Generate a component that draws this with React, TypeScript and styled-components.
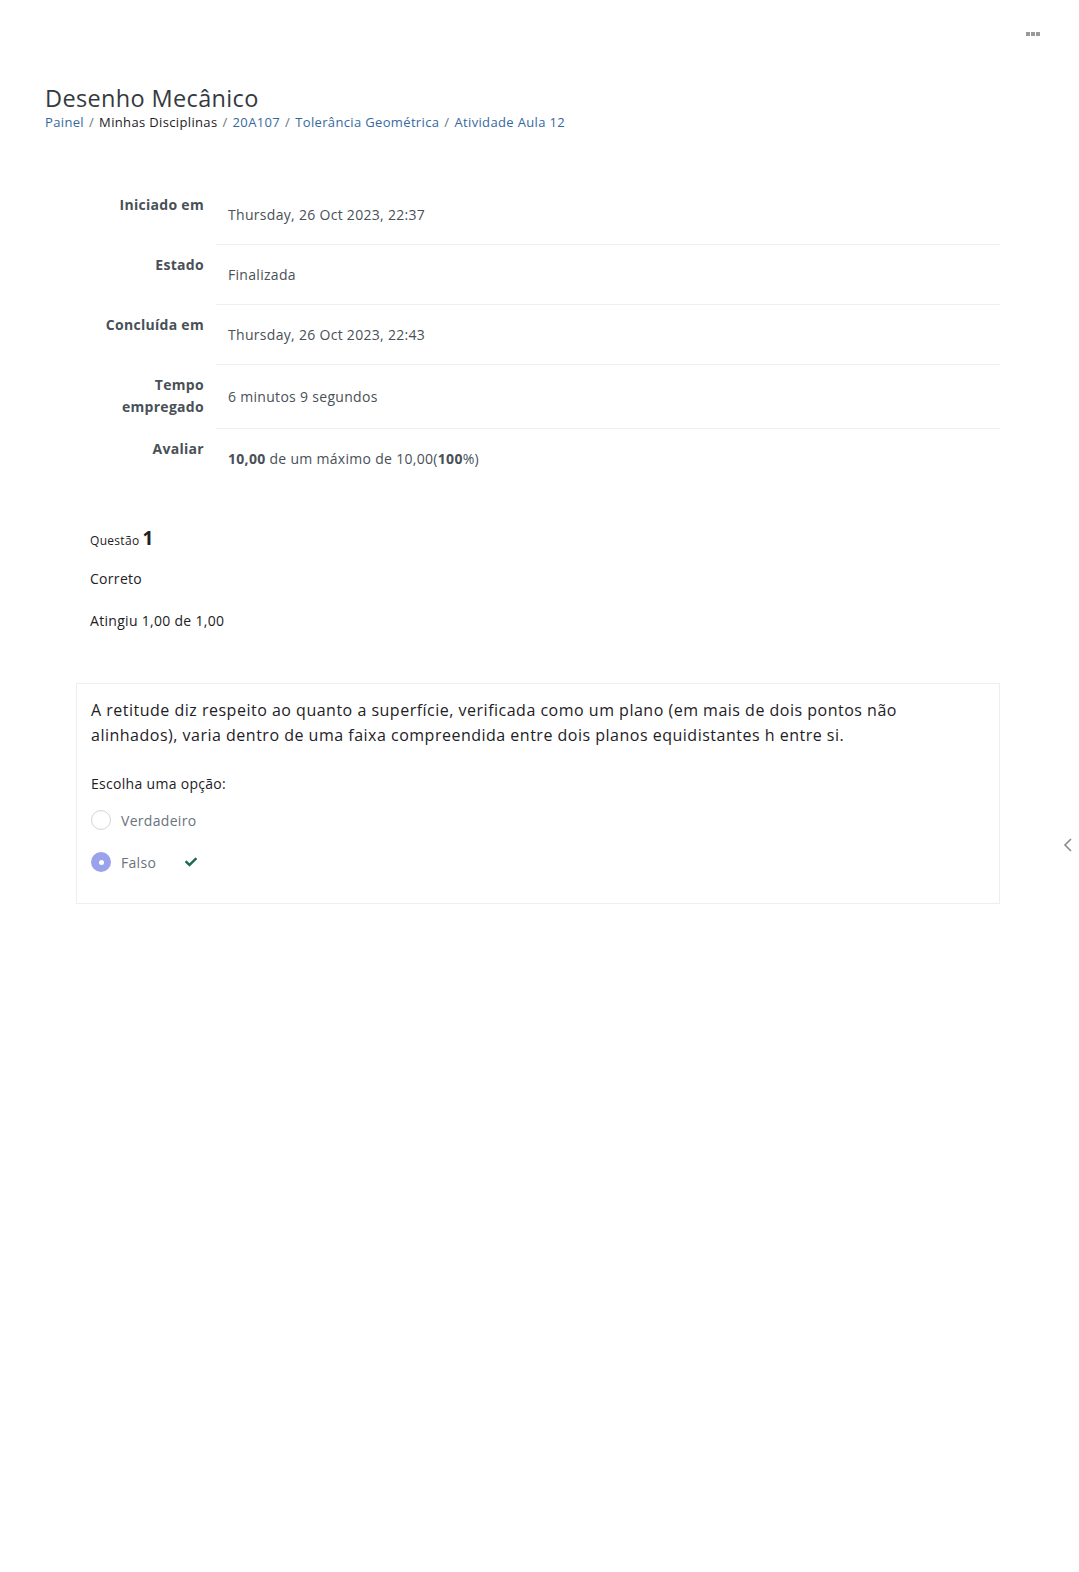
import React from 'react';
import styled, { createGlobalStyle } from 'styled-components';
import { FaCheck } from 'react-icons/fa';

const GlobalStyle = createGlobalStyle`
    html, body {
        margin: 0;
        padding: 0;
        background: #fff;
    }
    body {
        font-family: 'Open Sans', 'Noto Sans', sans-serif;
        color: #1d2125;
        letter-spacing: 0.3px;
        -webkit-font-smoothing: antialiased;
    }
`;

const Page = styled.div`
    position: relative;
    min-height: 1572px;
    padding: 0 79px 0 45px;
    box-sizing: border-box;
`;

const TopBar = styled.div`
    display: flex;
    justify-content: flex-end;
    height: 68px;
    align-items: center;
    margin-right: -40px;
`;

const MoreDots = styled.div`
    display: flex;
    gap: 1px;

    span {
        width: 4px;
        height: 4px;
        background: #9a9a9a;
    }
`;

const Title = styled.h1`
    margin: 16px 0 0;
    font-size: 23.5px;
    font-weight: 400;
    line-height: 28px;
    color: #343a40;
    letter-spacing: 0.35px;
`;

const Breadcrumb = styled.nav`
    display: flex;
    align-items: center;
    font-size: 13px;
    line-height: 20px;
    color: #1d2125;
    letter-spacing: 0.35px;
`;

const Crumb = styled.span<{ $link?: boolean }>`
    color: ${({ $link }) => ($link ? '#35699e' : '#1d2125')};
`;

const Sep = styled.span`
    color: #6a737b;
    padding: 0 5px;
`;

const Content = styled.div`
    margin: 53px 0 0 31px;
`;

const Summary = styled.div`
    display: grid;
    grid-template-columns: 140px 1fr;
`;

const Label = styled.div`
    text-align: right;
    font-weight: 700;
    font-size: 14px;
    line-height: 22px;
    color: #495057;
    padding: 9px 12px 11px 0;
`;

const Value = styled.div<{ $last?: boolean }>`
    display: flex;
    align-items: center;
    font-size: 14px;
    line-height: 22px;
    color: #495057;
    padding: 19px 12px 18px;
    border-bottom: ${({ $last }) => ($last ? 'none' : '1px solid #eceeef')};

    b {
        font-weight: 700;
    }
`;

const QuestionInfo = styled.div`
    margin-top: 38px;
    padding-left: 14px;
    color: #1d2125;
`;

const QNo = styled.div`
    font-size: 12px;
    line-height: 24px;
    display: flex;
    align-items: baseline;
    gap: 3px;

    strong {
        font-size: 19px;
        font-weight: 700;
    }
`;

const InfoLine = styled.div<{ $gap: number }>`
    font-size: 14px;
    line-height: 22px;
    margin-top: ${({ $gap }) => $gap}px;
`;

const Card = styled.div`
    margin-top: 51px;
    border: 1px solid #eeeeee;
    padding: 14px 14px 20px;
`;

const QText = styled.p`
    margin: 0;
    font-size: 16px;
    line-height: 25px;
    color: #1d2125;
    letter-spacing: 0.5px;
    max-width: 860px;
`;

const Prompt = styled.div`
    margin-top: 25px;
    margin-bottom: 4px;
    font-size: 14px;
    line-height: 22px;
    color: #1d2125;
`;

const Option = styled.div`
    display: flex;
    align-items: center;
    height: 42px;
    font-size: 14px;
    color: #6a737b;
`;

const Radio = styled.span<{ $checked?: boolean }>`
    width: 20px;
    height: 20px;
    box-sizing: border-box;
    border-radius: 50%;
    margin-right: 10px;
    display: flex;
    align-items: center;
    justify-content: center;
    border: ${({ $checked }) => ($checked ? 'none' : '1px solid #d4d4d4')};
    background: ${({ $checked }) => ($checked ? '#99a2ea' : '#fff')};

    &::after {
        content: '';
        display: ${({ $checked }) => ($checked ? 'block' : 'none')};
        width: 5px;
        height: 5px;
        border-radius: 50%;
        background: #fff;
    }
`;

const Tick = styled.span`
    color: #1e6b49;
    margin-left: 29px;
    display: flex;
    font-size: 12px;
`;

const DrawerToggle = styled.div`
    position: absolute;
    right: 5px;
    top: 837px;
    color: #8a8a8a;
    display: flex;
`;

export default function App() {
    const rows = [
        { label: 'Iniciado em', value: 'Thursday, 26 Oct 2023, 22:37' },
        { label: 'Estado', value: 'Finalizada' },
        { label: 'Concluída em', value: 'Thursday, 26 Oct 2023, 22:43' },
        { label: 'Tempo empregado', value: '6 minutos 9 segundos' },
    ];

    return (
        <Page>
            <GlobalStyle />
            <TopBar>
                <MoreDots>
                    <span />
                    <span />
                    <span />
                </MoreDots>
            </TopBar>

            <Title>Desenho Mecânico</Title>
            <Breadcrumb>
                <Crumb $link>Painel</Crumb>
                <Sep>/</Sep>
                <Crumb>Minhas Disciplinas</Crumb>
                <Sep>/</Sep>
                <Crumb $link>20A107</Crumb>
                <Sep>/</Sep>
                <Crumb $link>Tolerância Geométrica</Crumb>
                <Sep>/</Sep>
                <Crumb $link>Atividade Aula 12</Crumb>
            </Breadcrumb>

            <Content>
                <Summary>
                    {rows.map((row) => (
                        <React.Fragment key={row.label}>
                            <Label>
                                {row.label === 'Tempo empregado' ? (
                                    <>
                                        Tempo
                                        <br />
                                        empregado
                                    </>
                                ) : (
                                    row.label
                                )}
                            </Label>
                            <Value>{row.value}</Value>
                        </React.Fragment>
                    ))}
                    <Label>Avaliar</Label>
                    <Value $last>
                        <span>
                            <b>10,00</b> de um máximo de 10,00(<b>100</b>%)
                        </span>
                    </Value>
                </Summary>

                <QuestionInfo>
                    <QNo>
                        Questão <strong>1</strong>
                    </QNo>
                    <InfoLine $gap={15}>Correto</InfoLine>
                    <InfoLine $gap={20}>Atingiu 1,00 de 1,00</InfoLine>
                </QuestionInfo>

                <Card>
                    <QText>
                        A retitude diz respeito ao quanto a superfície, verificada como um plano (em mais de dois
                        pontos não alinhados), varia dentro de uma faixa compreendida entre dois planos
                        equidistantes h entre si.
                    </QText>
                    <Prompt>Escolha uma opção:</Prompt>
                    <Option>
                        <Radio />
                        Verdadeiro
                    </Option>
                    <Option>
                        <Radio $checked />
                        Falso
                        <Tick>
                            <FaCheck />
                        </Tick>
                    </Option>
                </Card>
            </Content>

            <DrawerToggle>
                <svg width="12" height="16" viewBox="0 0 12 16" fill="none" stroke="currentColor" strokeWidth="1.6">
                    <path d="M9 2 L3 8 L9 14" />
                </svg>
            </DrawerToggle>
        </Page>
    );
}
